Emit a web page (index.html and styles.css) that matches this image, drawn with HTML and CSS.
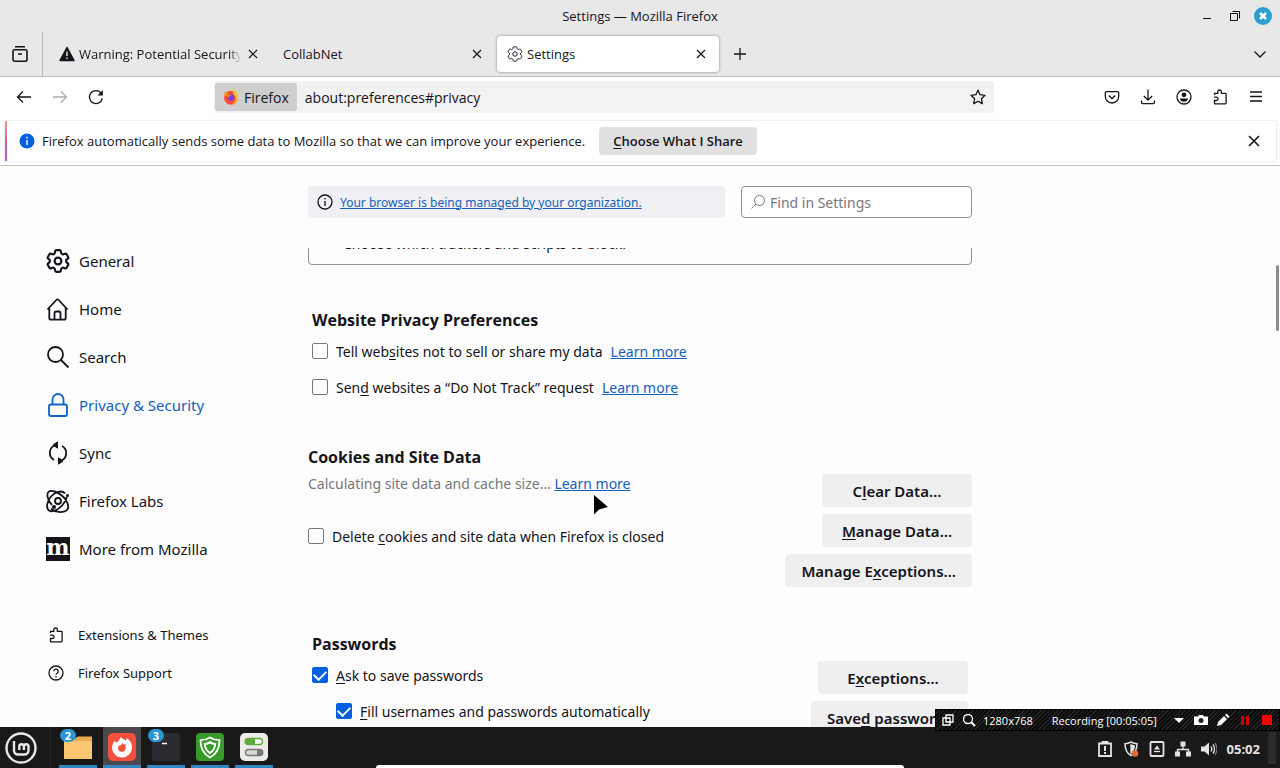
FILE: index.html
```html
<!DOCTYPE html>
<html lang="en">
<head>
    <meta charset="UTF-8">
    <meta name="viewport" content="width=device-width, initial-scale=1.0">
    <title>Settings — Mozilla Firefox</title>
    <link rel="stylesheet" href="styles.css">
</head>
<body>

    <!-- shared icons -->
    <svg class="sprite" aria-hidden="true">
        <symbol id="i-gear" viewBox="2 2 20 20">
            <path d="M9.594 3.94c.09-.542.56-.94 1.11-.94h2.593c.55 0 1.02.398 1.11.94l.213 1.281c.063.374.313.686.645.87.074.04.147.083.22.127.325.196.72.257 1.075.124l1.217-.456a1.125 1.125 0 0 1 1.37.49l1.296 2.247a1.125 1.125 0 0 1-.26 1.431l-1.003.827c-.293.241-.438.613-.43.992a7.723 7.723 0 0 1 0 .255c-.008.378.137.75.43.991l1.004.827c.424.35.534.955.26 1.43l-1.298 2.247a1.125 1.125 0 0 1-1.369.491l-1.217-.456c-.355-.133-.75-.072-1.076.124a6.47 6.47 0 0 1-.22.128c-.331.183-.581.495-.644.869l-.213 1.281c-.09.543-.56.94-1.11.94h-2.594c-.55 0-1.019-.398-1.11-.94l-.213-1.281c-.062-.374-.312-.686-.644-.87a6.52 6.52 0 0 1-.22-.127c-.325-.196-.72-.257-1.076-.124l-1.217.456a1.125 1.125 0 0 1-1.369-.49l-1.297-2.247a1.125 1.125 0 0 1 .26-1.431l1.004-.827c.292-.24.437-.613.43-.991a6.932 6.932 0 0 1 0-.255c.007-.38-.138-.751-.43-.992l-1.004-.827a1.125 1.125 0 0 1-.26-1.43l1.297-2.247a1.125 1.125 0 0 1 1.37-.491l1.216.456c.356.133.751.072 1.076-.124.072-.044.146-.086.22-.128.332-.183.582-.495.644-.869l.214-1.28Z"/>
            <circle cx="12" cy="12" r="2.8"/>
        </symbol>
        <symbol id="i-close" viewBox="0 0 16 16"><path d="M4 4l8 8M12 4l-8 8"/></symbol>
        <symbol id="i-puzzle" viewBox="0 0 16 16">
            <path d="M2.5 6V4.4h3.3V2.8a1.8 1.8 0 0 1 3.6 0v1.6h3.9c.5 0 .8.3.8.8v8.9c0 .5-.3.8-.8.8H3.3c-.5 0-.8-.3-.8-.8v-2.6h1.9a1.7 1.7 0 0 0 0-3.4H2.1"/>
        </symbol>
    </svg>

    <header class="titlebar">
        <span class="title">Settings — Mozilla Firefox</span>
        <div class="window-buttons">
            <button aria-label="Minimize"><svg class="icon" viewBox="0 0 16 16"><path d="M4 10.5h8"/></svg></button>
            <button aria-label="Restore"><svg class="icon" viewBox="0 0 16 16"><path d="M4.500 5.500h7v7h-7zM6.500 3.500h7v7"/></svg></button>
            <button aria-label="Close window"><svg class="icon-lg" viewBox="0 0 20 20"><circle cx="10" cy="10" r="9" fill="#2a9fd0" stroke="none"/><path d="M7 7l6 6M13 7l-6 6" stroke="#fff" stroke-width="2.600"/></svg></button>
        </div>
    </header>

    <div class="tabbar">
        <button class="firefox-view" aria-label="Recent browsing">
            <svg class="icon-md" viewBox="0 0 18 18"><path d="M4 1.700h10M3.500 4.700h11c.8 0 1.500.7 1.500 1.500v8.300c0 1-.7 1.700-1.700 1.700H3.700c-1 0-1.700-.7-1.700-1.700V6.200c0-.8.700-1.500 1.500-1.500zM7 9h4" stroke-width="1.600"/></svg>
        </button>
        <div class="tab">
            <svg class="icon" viewBox="0 0 16 16"><path d="M8 1.500L15 14.500H1z" fill="#15141a" stroke="#15141a" stroke-width="1.500" stroke-linejoin="round"/><path d="M8 5.500v4.500M8 11.500v1.500" stroke="#e8e8e8" stroke-width="1.400"/></svg>
            <button class="tab-title fade">Warning: Potential Security</button>
            <button class="tab-close" aria-label="Close tab"><svg class="icon"><use href="#i-close"/></svg></button>
        </div>
        <div class="tab">
            <button class="tab-title">CollabNet</button>
            <button class="tab-close" aria-label="Close tab"><svg class="icon"><use href="#i-close"/></svg></button>
        </div>
        <div class="tab active">
            <svg class="icon"><use href="#i-gear"/></svg>
            <button class="tab-title">Settings</button>
            <button class="tab-close" aria-label="Close tab"><svg class="icon"><use href="#i-close"/></svg></button>
        </div>
        <button class="new-tab" aria-label="New tab"><svg class="icon" viewBox="0 0 16 16"><path d="M8 2v12M2 8h12"/></svg></button>
        <button class="all-tabs" aria-label="List all tabs"><svg class="icon" viewBox="0 0 16 16"><path d="M2.500 5.500L8 11l5.500-5.500"/></svg></button>
    </div>

    <nav class="navbar">
        <button class="tool" aria-label="Back"><svg class="icon" viewBox="0 0 16 16"><path d="M15 8H1.500M7 2.500L1.500 8 7 13.500"/></svg></button>
        <button class="tool disabled" aria-label="Forward"><svg class="icon" viewBox="0 0 16 16"><path d="M1 8h13.500M9 2.500L14.500 8 9 13.500"/></svg></button>
        <button class="tool" aria-label="Reload"><svg class="icon" viewBox="0 0 16 16"><path d="M14.300 9.500A6.500 6.500 0 1 1 12.800 3.700"/><path d="M14.800 1v5.500H9.500z" fill="#15141a" stroke="none"/></svg></button>
        <div class="urlbar">
            <button class="identity">
                <svg class="icon" viewBox="0 0 16 16">
                    <g stroke="none">
                        <circle cx="8" cy="8.700" r="7" fill="#ff4a3d"/>
                        <path d="M9.500 0c3.500 2 6.200 5.500 5.500 9.500-.6 3.500-3.500 6-7 6 3-1 5-3 4.800-6C12.500 6 9 5 9.500 0z" fill="#ffc52e"/>
                        <path d="M1 8C1 4.500 2 3 3 2c.3 1.500 1 2 2.500 2.500z" fill="#ff9a1f"/>
                        <circle cx="8" cy="8.500" r="3.200" fill="#7a3fe0"/>
                        <path d="M3.500 6c2-.8 3.500.2 5.300.8-1.800 0-2.300 1-3.600 1.300z" fill="#ff8a16"/>
                    </g>
                </svg>
                Firefox
            </button>
            <input class="url" type="text" value="about:preferences#privacy" aria-label="Address">
            <button class="star" aria-label="Bookmark this page"><svg class="icon" viewBox="0 0 16 16"><path d="M8 1.200l2.100 4.500 4.900.6-3.600 3.400.9 4.900L8 12.200l-4.300 2.400.9-4.900L1 6.300l4.900-.6z" stroke-linejoin="round"/></svg></button>
        </div>
        <button class="tool" aria-label="Save to Pocket"><svg class="icon" viewBox="0 0 16 16"><path d="M2.600 2.700h10.800c.8 0 1.300.5 1.300 1.300v3.300a6.700 6.700 0 0 1-13.400 0V4c0-.8.500-1.300 1.300-1.300z"/><path d="M4.800 6.500L8 9.500l3.200-3"/></svg></button>
        <button class="tool" aria-label="Downloads"><svg class="icon" viewBox="0 0 16 16"><path d="M8 .5v10.500M3.800 7L8 11.200 12.200 7M1.500 11.500v1.800c0 .8.500 1.300 1.300 1.300h10.400c.8 0 1.300-.5 1.300-1.300v-1.800"/></svg></button>
        <button class="tool" aria-label="Account"><svg class="icon" viewBox="0 0 16 16"><circle cx="8" cy="8" r="7"/><circle cx="8" cy="5.800" r="2.400" fill="#15141a" stroke="none"/><path d="M3.800 9.500h8.400c-.3 2-2 3.300-4.200 3.300s-3.900-1.300-4.200-3.300z" fill="#15141a" stroke="none"/></svg></button>
        <button class="tool" aria-label="Extensions"><svg class="icon"><use href="#i-puzzle"/></svg></button>
        <button class="tool" aria-label="Menu"><svg class="icon" viewBox="0 0 16 16"><path d="M2 3h12M2 7.500h12M2 12h12"/></svg></button>
    </nav>

    <div class="notice-wrap">
        <div class="notice">
            <svg class="icon" viewBox="0 0 16 16"><circle cx="8" cy="8" r="7.500" fill="#0060df" stroke="none"/><path d="M8 7v5M8 3.800v1.700" stroke="#fff" stroke-width="1.400"/></svg>
            <span>Firefox automatically sends some data to Mozilla so that we can improve your experience.</span>
            <button class="share"><u>C</u>hoose What I Share</button>
            <button class="notice-close" aria-label="Dismiss"><svg class="icon-lg"><use href="#i-close"/></svg></button>
        </div>
    </div>

    <main class="prefs">
        <nav class="categories">
            <a href="#general"><svg class="icon-xl"><use href="#i-gear"/></svg>General</a>
            <a href="#home"><svg class="icon-xl" viewBox="0 0 24 24"><path d="M1.500 12.500L10.300 3a1.600 1.600 0 0 1 2.400 0l8.800 9.500M3.300 11v10c0 1 .7 1.700 1.700 1.700h13c1 0 1.700-.7 1.700-1.700V11M8.500 22.500v-6.300c0-1 .7-1.700 1.700-1.700h2.600c1 0 1.700.7 1.700 1.700v6.300"/></svg>Home</a>
            <a href="#search"><svg class="icon-xl" viewBox="0 0 24 24"><circle cx="9.500" cy="9.500" r="7.500"/><path d="M15 15l7.500 7.500"/></svg>Search</a>
            <a href="#privacy" class="selected"><svg class="icon-xl" viewBox="0 0 24 24"><path d="M6.500 12V6.500a5.500 5.500 0 0 1 11 0V12M5 11.500h14c1.200 0 2 .8 2 2V21c0 1.200-.8 2-2 2H5c-1.200 0-2-.8-2-2v-7.500c0-1.200.8-2 2-2z"/></svg>Privacy &amp; Security</a>
            <a href="#sync"><svg class="icon-xl" viewBox="0 0 24 24"><path d="M8 19C1.800 15.500 2.500 6 10 4M16 5c6.200 3.500 5.500 13-2 15"/><path d="M11.500.8v6.400L7 4zM12.500 23.200v-6.400L17 20z" fill="#15141a" stroke-width="1"/></svg>Sync</a>
            <a href="#labs"><svg class="icon-xl" viewBox="0 0 24 24"><path d="M19 4.500C16 .5 9 3 5 7.500.5 12.500 0 19.500 3 21.500c3.500 2.300 9.500-1 13.500-5.500 2.500-3 4-6 4.300-8.500M5 19.500c4 4 11.500 4.500 15.500 2 3.500-2.500 1-10-3.500-14C12 3 6 .5 3 2.500 0 4.500 1.500 11.500 6 16"/><circle cx="12" cy="12" r="3"/><circle cx="21.500" cy="6.500" r="1.500" fill="#15141a" stroke="none"/><circle cx="8" cy="18" r="2" fill="#15141a" stroke="none"/></svg>Firefox Labs</a>
            <a href="#more"><span class="mozilla">m</span>More from Mozilla</a>
            <div class="secondary">
                <a href="#addons"><svg class="icon"><use href="#i-puzzle"/></svg>Extensions &amp; Themes</a>
                <a href="#support"><svg class="icon" viewBox="0 0 16 16"><circle cx="8" cy="8" r="7"/><path d="M5.800 6.300a2.200 2.200 0 1 1 3.300 1.900c-.7.400-1.100.7-1.100 1.600M8 11v1.400"/></svg>Firefox Support</a>
            </div>
        </nav>

        <div class="pane">
            <div class="pane-top">
                <div class="policy">
                    <svg class="icon" viewBox="0 0 16 16"><circle cx="8" cy="8" r="7"/><path d="M8 7v5M8 4v1.500"/></svg>
                    <a href="#policies">Your browser is being managed by your organization.</a>
                </div>
                <div class="search-box">
                    <svg class="icon" viewBox="0 0 16 16"><circle cx="9.500" cy="6.500" r="5"/><path d="M6 10l-4.500 4.500"/></svg>
                    <input type="search" placeholder="Find in Settings" aria-label="Find in Settings">
                </div>
            </div>

            <div class="pane-body">
                <div class="tracking-box">Choose which trackers and scripts to block.</div>

                <section class="inset website-privacy">
                    <h2>Website Privacy Preferences</h2>
                    <div class="check-rows">
                        <div class="check-row"><label><input type="checkbox"><span>Tell web<u>s</u>ites not to sell or share my data</span></label><a href="#gpc">Learn more</a></div>
                        <div class="check-row"><label><input type="checkbox"><span>Sen<u>d</u> websites a “Do Not Track” request</span></label><a href="#dnt">Learn more</a></div>
                    </div>
                </section>

                <section class="cookies">
                    <h2>Cookies and Site Data</h2>
                    <div class="split">
                        <div>
                            <p class="description">Calculating site data and cache size… <a href="#storage">Learn more</a></p>
                            <div class="check-row"><label><input type="checkbox"><span>Delete <u>c</u>ookies and site data when Firefox is closed</span></label></div>
                        </div>
                        <div class="actions">
                            <button>C<u>l</u>ear Data…</button>
                            <button><u>M</u>anage Data…</button>
                            <button>Manage E<u>x</u>ceptions…</button>
                        </div>
                    </div>
                </section>

                <section class="inset passwords">
                    <h2>Passwords</h2>
                    <div class="split">
                        <div class="check-rows">
                            <div class="check-row"><label><input type="checkbox" checked><span><u>A</u>sk to save passwords</span></label></div>
                            <div class="check-row nested"><label><input type="checkbox" checked><span><u>F</u>ill usernames and passwords automatically</span></label></div>
                        </div>
                        <div class="actions">
                            <button>E<u>x</u>ceptions…</button>
                            <button>Save<u>d</u> passwords</button>
                        </div>
                    </div>
                </section>
            </div>
        </div>
        <div class="scroll-thumb"></div>
    </main>

    <footer class="taskbar">
        <button class="menu" aria-label="Menu">
            <svg class="mint" viewBox="0 0 32 32"><circle cx="16" cy="16" r="14.500"/><path d="M9 9v9.500a4 4 0 0 0 4 4h6.500a4 4 0 0 0 4-4v-4a2.300 2.300 0 0 0-4.600 0V18M18.900 14.500a2.300 2.300 0 0 0-4.600 0V18"/></svg>
        </button>
        <div class="launchers">
            <button class="app" aria-label="Files">
                <svg viewBox="0 0 30 30"><path d="M1 6.500h11l3-2h14v22H1z" fill="#e9a94f"/><path d="M1 9h28v18H1z" fill="#fbc671"/></svg>
                <span class="badge">2</span>
            </button>
            <button class="app current" aria-label="Firefox">
                <svg viewBox="0 0 30 30"><rect x="1" y="1" width="28" height="28" rx="5" fill="#f0503c"/><path d="M14 5c1 2 3 2 4.500 3.500 1-.5 1-1.500 1-2.500C23 8 25 11.500 25 15a10 10 0 0 1-20 1c0-3 1-5.500 3-7.500.3 1.500 1 2 2 2 1-.5 2.500-3 4-5.500z" fill="#fff"/><path d="M15 11l2 1.500h2.500c-1 .8-1 1.500-1 2.500a3.800 3.800 0 1 1-6.500-1.500c1.500.3 3-.8 3-2.500z" fill="#f0503c"/></svg>
            </button>
            <button class="app" aria-label="Terminal">
                <svg viewBox="0 0 30 30"><rect x="1" y="1" width="28" height="28" rx="3" fill="#2b2c31"/><path d="M11 11.500h5" stroke="#fff" stroke-width="1.500"/></svg>
                <span class="badge">3</span>
            </button>
            <button class="app" aria-label="Update Manager">
                <svg viewBox="0 0 30 30"><rect x="1" y="1" width="28" height="28" rx="4" fill="#389a2b"/><path d="M15 5.500c3 2 6 2.700 9.500 2.700 0 8-3 13.800-9.500 17.300C8.500 22 5.500 16.200 5.500 8.200 9 8.200 12 7.500 15 5.500z" fill="none" stroke="#fff" stroke-width="1.800"/><path d="M15 9c2 1.300 4 2 6.300 2.200-.4 5-2.500 8.600-6.300 11-3.800-2.400-5.900-6-6.300-11C11 11 13 10.300 15 9z" fill="#fff"/><path d="M15 11.500c1.300.8 2.700 1.300 4.200 1.500-.5 3-1.900 5.200-4.200 6.800-2.300-1.600-3.700-3.800-4.200-6.800 1.500-.2 2.900-.7 4.200-1.500z" fill="#389a2b"/></svg>
            </button>
            <button class="app" aria-label="System Settings">
                <svg viewBox="0 0 30 30"><rect x="1" y="1" width="28" height="28" rx="5" fill="#ecebe8"/><rect x="6.500" y="6.500" width="17" height="6" rx="3" fill="#fff" stroke="#5cab3a"/><path d="M9 6h7v7H9a3 3 0 0 1 0-7z" fill="#5cab3a"/><rect x="6.500" y="17.500" width="17" height="6" rx="3" fill="#d8d8d6" stroke="#77777a"/><path d="M18 17h3a3 3 0 0 1 0 7h-3z" fill="#77777a"/></svg>
            </button>
        </div>
        <div class="tray">
            <svg class="icon" viewBox="0 0 16 16"><path d="M2 2.500h12v12.500H2zM5.500 2.500V.8h5v1.700" stroke-width="1.800"/><path d="M8 5v5M8 11v2" stroke-width="2"/></svg>
            <svg class="icon" viewBox="0 0 16 16"><path d="M8 1c2 1.200 4 1.700 6 1.700 0 5.500-2 9.500-6 12-4-2.500-6-6.500-6-12C4 2.700 6 2.200 8 1z" stroke-width="1.500"/><path d="M8 4v8c2-1.500 3-3.500 3.300-7z" fill="#e4e4e4"/><circle cx="12" cy="12.500" r="3.300" fill="#e5693c" stroke="none"/></svg>
            <svg class="icon" viewBox="0 0 16 16"><rect x="1.500" y="1" width="13" height="14" rx="1" stroke-width="1.800"/><path d="M8 4.500l3 4H5z" fill="#e4e4e4" stroke="none"/><path d="M5 10.500h6"/></svg>
            <svg class="icon" viewBox="0 0 16 16"><path d="M5.500.5h5v5h-5zM0 10.500h5v5H0zM11 10.500h5v5h-5z" fill="#e4e4e4" stroke="none"/><path d="M8 5v3.500M2.500 11V8.500h11V11"/></svg>
            <svg class="icon" viewBox="0 0 16 16"><path d="M0 5.500h3.500L8 1.500v13l-4.500-4H0z" fill="#e4e4e4" stroke="none"/><path d="M10 5.500c1 1.500 1 3.500 0 5M12 3.500c2 2.500 2 6.500 0 9"/><path d="M14 2c2.300 3.500 2.300 8.500 0 12" stroke="#77777a"/></svg>
            <time>05:02</time>
        </div>
        <span class="show-desktop"></span>
        <span class="drawer"></span>
    </footer>

    <div class="recorder">
        <svg viewBox="0 0 14 14"><path d="M5 2h7v7H5zM2 5h7v7H2z"/></svg>
        <svg viewBox="0 0 14 14"><circle cx="6" cy="6" r="4.500"/><path d="M9 9l4 4" stroke-width="2"/></svg>
        <span>1280x768</span>
        <span class="time">Recording [00:05:05]</span>
        <div class="rec-buttons">
            <button aria-label="Options"><svg viewBox="0 0 14 14"><path d="M2 5h10l-5 5z" fill="#fff" stroke="none"/></svg></button>
            <button aria-label="Screenshot"><svg viewBox="0 0 14 14"><path d="M0 3.500h4L5 2h4l1 1.500h4V12H0z" fill="#fff" stroke="none"/><circle cx="7" cy="7.500" r="2.500" fill="#222" stroke="none"/></svg></button>
            <button aria-label="Draw"><svg viewBox="0 0 14 14"><path d="M1 13l1-4 6-6 3 3-6 6zM9 2l1.500-1.500 3 3L12 5z" fill="#fff" stroke="none"/></svg></button>
            <button aria-label="Pause"><svg viewBox="0 0 14 14"><path d="M3 3h3v9H3zM8 3h3v9H8z" fill="#d00000" stroke="none"/></svg></button>
            <button aria-label="Stop"><svg viewBox="0 0 14 14"><path d="M2 2h10v10H2z" fill="#f00000" stroke="none"/></svg></button>
        </div>
    </div>

    <svg class="pointer" viewBox="0 0 18 24"><path d="M2 2v19.500l5-5 9-2.500z" fill="#000" stroke="#fff" stroke-width="2.500" stroke-linejoin="round" paint-order="stroke"/></svg>

</body>
</html>
```
FILE: styles.css
```css
* {
    box-sizing: border-box;
}
body {
    margin: 0;
    height: 100vh;
    display: flex;
    flex-direction: column;
    overflow: hidden;
    background: #fdfdfd;
    color: #15141a;
    font-family: "Open Sans", "Noto Sans", sans-serif;
    font-size: 13px;
}
button, input {
    font: inherit;
    color: inherit;
}
button {
    border: 0;
    padding: 0;
    background: none;
    display: flex;
    align-items: center;
    justify-content: center;
}
u {
    text-underline-offset: 2px;
}
a {
    color: #1560bd;
}
svg {
    fill: none;
    stroke: #15141a;
    stroke-width: 1.3;
    flex: none;
    display: block;
}
.sprite {
    position: absolute;
    width: 0;
    height: 0;
}
.icon {
    width: 16px;
    height: 16px;
}
.icon-md {
    width: 18px;
    height: 18px;
}
.icon-lg {
    width: 20px;
    height: 20px;
}
.icon-xl {
    width: 24px;
    height: 24px;
    stroke-width: 1.8;
}

/* window title and tabs */
.titlebar {
    display: grid;
    grid-template-columns: 1fr auto 1fr;
    align-items: center;
    height: 32px;
    background: #e8e8e8;
}
.title {
    grid-column: 2;
    font-weight: 500;
}
.window-buttons {
    justify-self: end;
    display: flex;
    align-items: center;
    gap: 11px;
    padding-right: 7px;
}
.window-buttons svg {
    stroke-width: 1;
}
.tabbar {
    display: flex;
    align-items: center;
    height: 45px;
    background: #e8e8e8;
    border-bottom: 1px solid #c0c0c0;
}
.firefox-view {
    width: 43px;
    height: 44px;
    padding-right: 2px;
    margin-right: 5px;
    border-right: 1px solid #b8b8b8;
}
.tab {
    width: 222px;
    height: 36px;
    margin: 0 1px;
    padding: 0 10px;
    display: flex;
    align-items: center;
    gap: 4px;
    border-radius: 4px;
}
.tab.active {
    background: #fff;
    box-shadow: 0 0 3px rgba(0, 0, 0, 0.45);
}
.tab svg {
    stroke-width: 1.2;
}
.tab-title {
    flex: 1;
    min-width: 0;
    justify-content: flex-start;
    white-space: nowrap;
}
.tab-title.fade {
    -webkit-mask-image: linear-gradient(to left, transparent, #000 12px);
    mask-image: linear-gradient(to left, transparent, #000 12px);
}
.new-tab {
    margin-left: 12px;
}
.all-tabs {
    margin-left: auto;
    padding-right: 12px;
}

/* toolbar */
.navbar {
    display: flex;
    align-items: center;
    height: 40px;
    padding: 0 6px;
    background: #fff;
}
.tool {
    width: 36px;
    height: 32px;
}
.tool.disabled {
    opacity: 0.35;
}
.urlbar {
    flex: 1;
    min-width: 0;
    height: 32px;
    margin: 0 100px;
    display: flex;
    align-items: center;
    background: #f2f2f2;
    border-radius: 4px;
    font-size: 14px;
}
.identity {
    height: 28px;
    margin-left: 1px;
    padding: 0 8px;
    gap: 5px;
    background: #cfcfcf;
    border-radius: 3px;
}
.url {
    flex: 1;
    min-width: 0;
    border: 0;
    padding: 0 8px;
    background: none;
}
.star {
    width: 32px;
}

.notice-wrap {
    padding: 4px 4px 4px 5px;
    border-bottom: 1px solid #c4c4c4;
    background: #fff;
}
.notice {
    display: flex;
    align-items: center;
    height: 40px;
    padding: 0 12px;
    border-left: 2px solid;
    border-image: linear-gradient(#f0a080, #d060a0, #a060e0) 1;
    box-shadow: 0 0 2px rgba(0, 0, 0, 0.2);
}
.notice span {
    margin-left: 7px;
}
.share {
    height: 28px;
    margin-left: 14px;
    padding: 0 14px;
    background: #e0e0e0;
    border-radius: 4px;
    font-weight: 600;
    white-space: pre;
}
.notice-close {
    margin-left: auto;
}

/* settings page */
.prefs {
    position: relative;
    flex: 1;
    min-height: 0;
    display: flex;
    font-family: "Noto Sans", "Open Sans", sans-serif;
    font-size: 14px;
}
.categories {
    width: 308px;
    flex: none;
    display: flex;
    flex-direction: column;
    padding: 71px 0 35px 46px;
}
.categories a {
    display: flex;
    align-items: center;
    gap: 9px;
    height: 48px;
    color: #15141a;
    text-decoration: none;
    font-size: 15px;
}
.categories a.selected {
    color: #1560bd;
}
.categories a.selected svg {
    stroke: #0f62d0;
}
.mozilla {
    width: 24px;
    height: 24px;
    line-height: 20px;
    background: #15141a;
    color: #fff;
    font-family: "DejaVu Serif", "Liberation Serif", serif;
    font-weight: bold;
    font-size: 22px;
    text-align: center;
}
.categories .secondary {
    margin-top: auto;
    padding-left: 2px;
}
.secondary a {
    height: 38px;
    gap: 14px;
    font-size: 13px;
}
.pane {
    flex: 1;
    max-width: 664px;
    display: flex;
    flex-direction: column;
    min-height: 0;
}
.pane-top {
    display: flex;
    gap: 16px;
    padding: 20px 0 30px;
}
.policy {
    flex: 1;
    height: 32px;
    display: flex;
    align-items: center;
    gap: 7px;
    padding: 0 9px;
    background: #f0f0f4;
    border-radius: 4px;
    font-size: 12px;
}
.search-box {
    width: 231px;
    height: 32px;
    display: flex;
    align-items: center;
    gap: 4px;
    padding: 0 8px;
    background: #fff;
    border: 1px solid #8f8f9d;
    border-radius: 4px;
}
.search-box svg {
    stroke: #77777f;
    stroke-width: 1;
}
.search-box input {
    flex: 1;
    min-width: 0;
    border: 0;
    padding: 0;
    background: none;
}
.search-box input::placeholder {
    color: #77777f;
}
.pane-body {
    flex: 1;
    min-height: 0;
    overflow: hidden;
}
.tracking-box {
    height: 40px;
    margin-top: -23px;
    padding: 7px 34px;
    line-height: 22px;
    border: 1px solid #8f8f9d;
    border-radius: 4px;
}
.pane h2 {
    margin: 0;
    font-family: "Open Sans", "Noto Sans", sans-serif;
    font-size: 16px;
    line-height: 22px;
    font-weight: 700;
}
.inset {
    padding: 0 4px;
}
.website-privacy {
    margin-top: 44px;
}
.website-privacy h2 {
    margin-bottom: 8px;
}
.cookies {
    margin-top: 47px;
}
.cookies .split,
.passwords .split {
    margin-top: 6px;
}
.passwords {
    margin-top: 46px;
}
.passwords .check-rows {
    padding-top: 2px;
}
.split {
    display: flex;
    justify-content: space-between;
}
.check-rows {
    display: flex;
    flex-direction: column;
    gap: 12px;
}
.check-row {
    display: flex;
    align-items: center;
    gap: 8px;
    height: 24px;
}
.check-row label {
    display: flex;
    align-items: center;
    gap: 8px;
}
.check-row.nested {
    margin-left: 24px;
}
.check-row input {
    appearance: none;
    width: 16px;
    height: 16px;
    margin: 0;
    border: 1px solid #77777f;
    border-radius: 2px;
    background: #fff;
    display: grid;
    place-items: center;
}
.check-row input:checked {
    background: #0060df;
    border-color: #0060df;
}
.check-row input:checked::after {
    content: "";
    width: 6px;
    height: 10px;
    margin-bottom: 3px;
    border: solid #fff;
    border-width: 0 2px 2px 0;
    transform: rotate(45deg);
}
.description {
    margin: 0 0 30px;
    line-height: 20px;
    color: #77777c;
}
.actions {
    display: flex;
    flex-direction: column;
    align-items: flex-end;
    gap: 7px;
}
.actions button {
    min-width: 150px;
    height: 33px;
    padding: 0 16px;
    background: #efefef;
    border-radius: 4px;
    font-size: 15px;
    font-weight: 600;
    white-space: pre;
}
.scroll-thumb {
    position: absolute;
    top: 99px;
    right: 1px;
    width: 3px;
    height: 66px;
    border-radius: 2px;
    background: #8c8c8c;
}

/* desktop panel */
.taskbar {
    position: relative;
    display: flex;
    height: 41px;
    background: #191919;
    color: #e4e4e4;
}
.menu {
    width: 51px;
    padding-right: 9px;
    border-right: 1px solid #262626;
}
.mint {
    width: 32px;
    height: 32px;
    stroke: #e8e8e8;
    stroke-width: 2.4;
}
.launchers {
    display: flex;
    gap: 6px;
    margin-left: 8px;
}
.app {
    position: relative;
    width: 38px;
    border-bottom: 3px solid #2f86c0;
    padding-top: 2px;
}
.app.current {
    background: #4a4a4c;
}
.app svg {
    width: 30px;
    height: 30px;
    stroke: none;
}
.badge {
    position: absolute;
    top: 2px;
    left: 1px;
    width: 16px;
    height: 13px;
    line-height: 13px;
    border-radius: 7px;
    background: #2a97d4;
    color: #fff;
    font-size: 11px;
    font-weight: bold;
}
.tray {
    margin-left: auto;
    display: flex;
    align-items: center;
    gap: 10px;
    padding: 2px 8px 0 0;
}
.tray svg {
    stroke: #e4e4e4;
}
.tray time {
    font-size: 13px;
    font-weight: 700;
}
.show-desktop {
    width: 8px;
    margin: 5px 4px 4px 0;
    background: #2c2c2c;
}
.drawer {
    position: absolute;
    left: 50%;
    bottom: 0;
    width: 528px;
    height: 3px;
    transform: translateX(-50%);
    background: #fff;
    border-radius: 4px 4px 0 0;
}

/* overlays */
.recorder {
    position: absolute;
    right: 0;
    bottom: 37px;
    width: 345px;
    height: 22px;
    display: flex;
    align-items: center;
    padding: 0 5px;
    gap: 7px;
    border: 1px solid #000;
    background: repeating-linear-gradient(135deg, #0c0c0c 0 2px, #262626 2px 3px);
    color: #fff;
    font-size: 11px;
    white-space: nowrap;
}
.recorder svg {
    width: 14px;
    height: 14px;
    stroke: #fff;
}
.recorder .time {
    margin-left: 12px;
}
.rec-buttons {
    margin-left: auto;
    display: flex;
    gap: 8px;
}
.pointer {
    position: absolute;
    left: 592px;
    top: 493px;
    width: 18px;
    height: 24px;
}
```
